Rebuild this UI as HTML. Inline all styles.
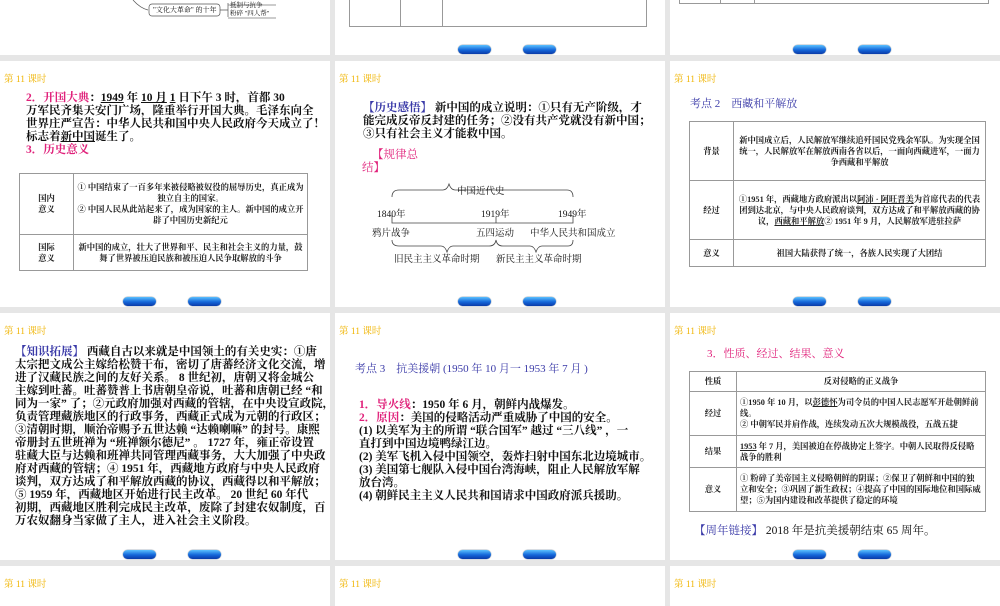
<!DOCTYPE html>
<html><head><meta charset="utf-8"><style>
*{margin:0;padding:0;box-sizing:border-box}
body{width:1000px;height:600px;background:#e6e6e6;position:relative;overflow:hidden;font-family:"Liberation Serif","Noto Serif CJK SC",serif;color:#111}
.p{position:absolute;background:#fff;overflow:hidden}
.a{position:absolute;white-space:nowrap}
.h{position:absolute;left:4px;font-size:9.5px;color:#f0b400;font-family:"Liberation Serif","Noto Serif CJK SC",serif}
.b{position:absolute;width:33px;height:9px;border-radius:5px;background:linear-gradient(#5ac0ff,#1466d8 55%,#0a3aa8);box-shadow:0 0 1px #024}
.t{font-size:11.5px;line-height:13px;font-weight:bold}
.pk{color:#e0207a}
.bl{color:#3a3aa8}
table{border-collapse:collapse;position:absolute;font-size:8.3px;line-height:11px;font-weight:bold;color:#222}
td{border:1px solid #999;text-align:center;vertical-align:middle;padding:1px 3px}
u{text-decoration:underline}
.d{position:absolute;white-space:nowrap;font-size:9.5px}
</style></head><body>

<div class="p" style="left:0;top:0;width:330px;height:55px">
  <svg class="a" style="left:0;top:0" width="330" height="55"><path d="M133 0 Q140 8 148 10" stroke="#555" fill="none" stroke-width=".7"/><rect x="149" y="4" width="71" height="12" rx="3" fill="none" stroke="#555" stroke-width=".7"/><path d="M220 10 H228 M228 3 V17" stroke="#555" stroke-width=".7"/><path d="M228 5 H276 M228 18 H276" stroke="#777" stroke-width=".7"/></svg>
  <div class="a" style="left:153px;top:5px;font-size:7px">"文化大革命" 的十年</div>
  <div class="a" style="left:230px;top:2px;font-size:6.5px;line-height:8px">抵制与抗争<br>粉碎 "四人帮"</div>
</div>
<div class="p" style="left:335px;top:0;width:330px;height:55px">
  <div class="a" style="left:14px;top:-1px;width:298px;height:28px;border:1px solid #999;border-top:none"></div>
  <div class="a" style="left:65px;top:0;width:1px;height:27px;background:#999"></div>
  <div class="a" style="left:107px;top:0;width:1px;height:27px;background:#999"></div>
  <div class="b" style="left:123px;top:45px"></div><div class="b" style="left:188px;top:45px"></div>
</div>
<div class="p" style="left:670px;top:0;width:330px;height:55px">
  <div class="a" style="left:9px;top:-1px;width:310px;height:5px;border:1px solid #999;border-top:none"></div>
  <div class="a" style="left:50px;top:0;width:1px;height:4px;background:#999"></div>
  <div class="a" style="left:84px;top:0;width:1px;height:4px;background:#999"></div>
  <div class="b" style="left:123px;top:45px"></div><div class="b" style="left:188px;top:45px"></div>
</div>

<div class="p" style="left:0;top:61px;width:330px;height:246px">
  <div class="h" style="top:10px">第 11 课时</div>
  <div class="a t" style="left:26px;top:31px"><span class="pk">2．开国大典</span>：<u>1949</u> 年 <u>10 月</u> <u>1</u> 日下午 3 时，首都 30<br>万军民齐集天安门广场，隆重举行开国大典。毛泽东向全<br>世界庄严宣告：中华人民共和国中央人民政府今天成立了！<br>标志着<u>新中国</u>诞生了。<br><span class="pk">3．历史意义</span></div>
  <table style="left:19px;top:112px;width:289px">
    <tr style="height:61px"><td style="width:54px">国内<br>意义</td><td>① 中国结束了一百多年来被侵略被奴役的屈辱历史，真正成为独立自主的国家。<br>② 中国人民从此站起来了，成为国家的主人。新中国的成立开辟了中国历史新纪元</td></tr>
    <tr style="height:36px"><td>国际<br>意义</td><td>新中国的成立，壮大了世界和平、民主和社会主义的力量，鼓舞了世界被压迫民族和被压迫人民争取解放的斗争</td></tr>
  </table>
  <div class="b" style="left:123px;top:236px"></div><div class="b" style="left:188px;top:236px"></div>
</div>
<div class="p" style="left:335px;top:61px;width:330px;height:246px">
  <div class="h" style="top:10px">第 11 课时</div>
  <div class="a t" style="left:28px;top:41px"><span class="bl">【历史感悟】</span> 新中国的成立说明：①只有无产阶级，才<br>能完成反帝反封建的任务；②没有共产党就没有新中国；<br>③只有社会主义才能救中国。</div>
  <div class="a" style="left:37px;top:88px;font-size:11.5px;line-height:13px;color:#e0207a">【规律总<br><span style="margin-left:-10px">结】</span></div>
  <svg class="a" style="left:0;top:119px" width="330" height="90"><g stroke="#444" fill="none" stroke-width=".8"><path d="M57 17 Q57 10 64 10 H108 Q112 10 114 4 Q116 10 120 10 H232 Q238 10 238 17"/><path d="M57 35 V43 H238 V35 M161 37 V43"/><path d="M57 60 Q57 66 64 66 H106 Q110 66 112 72 Q114 66 118 66 H154 Q160 66 161 60 Q162 66 168 66 H195 Q199 66 201 72 Q203 66 207 66 H233 Q238 66 238 60"/></g></svg>
  <div class="d" style="left:122px;top:122px">中国近代史</div>
  <div class="d" style="left:42px;top:145px">1840年</div>
  <div class="d" style="left:146px;top:145px">1919年</div>
  <div class="d" style="left:223px;top:145px">1949年</div>
  <div class="d" style="left:37px;top:164px">鸦片战争</div>
  <div class="d" style="left:141px;top:164px">五四运动</div>
  <div class="d" style="left:195px;top:164px">中华人民共和国成立</div>
  <div class="d" style="left:59px;top:190px">旧民主主义革命时期</div>
  <div class="d" style="left:161px;top:190px">新民主主义革命时期</div>
  <div class="b" style="left:123px;top:236px"></div><div class="b" style="left:188px;top:236px"></div>
</div>
<div class="p" style="left:670px;top:61px;width:330px;height:246px">
  <div class="h" style="top:10px">第 11 课时</div>
  <div class="a bl" style="left:20px;top:34px;font-size:11px">考点 2　西藏和平解放</div>
  <table style="left:19px;top:60px;width:297px">
    <tr style="height:59px"><td style="width:44px">背景</td><td>新中国成立后，人民解放军继续追歼国民党残余军队。为实现全国统一，人民解放军在解放西南各省以后，一面向西藏进军，一面力争西藏和平解放</td></tr>
    <tr style="height:59px"><td>经过</td><td>①1951 年，西藏地方政府派出以<u>阿沛 · 阿旺晋美</u>为首席代表的代表团到达北京，与中央人民政府谈判，双方达成了和平解放西藏的协议，<u>西藏和平解放</u>② 1951 年 9 月，人民解放军进驻拉萨</td></tr>
    <tr style="height:27px"><td>意义</td><td>祖国大陆获得了统一，各族人民实现了大团结</td></tr>
  </table>
  <div class="b" style="left:123px;top:236px"></div><div class="b" style="left:188px;top:236px"></div>
</div>

<div class="p" style="left:0;top:313px;width:330px;height:247px">
  <div class="h" style="top:10px">第 11 课时</div>
  <div class="a t" style="left:15px;top:33px"><span class="bl">【知识拓展】</span> 西藏自古以来就是中国领土的有关史实：①唐<br>太宗把文成公主嫁给松赞干布，密切了唐蕃经济文化交流，增<br>进了汉藏民族之间的友好关系。 8 世纪初，唐朝又将金城公<br>主嫁到吐蕃。吐蕃赞普上书唐朝皇帝说，吐蕃和唐朝已经 “和<br>同为一家” 了；②元政府加强对西藏的管辖，在中央设宣政院，<br>负责管理藏族地区的行政事务，西藏正式成为元朝的行政区；<br>③清朝时期，顺治帝赐予五世达赖 “达赖喇嘛” 的封号。康熙<br>帝册封五世班禅为 “班禅额尔德尼” 。 1727 年，雍正帝设置<br>驻藏大臣与达赖和班禅共同管理西藏事务，大大加强了中央政<br>府对西藏的管辖；④ 1951 年，西藏地方政府与中央人民政府<br>谈判，双方达成了和平解放西藏的协议，西藏得以和平解放；<br>⑤ 1959 年，西藏地区开始进行民主改革。 20 世纪 60 年代<br>初期，西藏地区胜利完成民主改革，废除了封建农奴制度，百<br>万农奴翻身当家做了主人，进入社会主义阶段。</div>
  <div class="b" style="left:123px;top:237px"></div><div class="b" style="left:188px;top:237px"></div>
</div>
<div class="p" style="left:335px;top:313px;width:330px;height:247px">
  <div class="h" style="top:10px">第 11 课时</div>
  <div class="a bl" style="left:20px;top:47px;font-size:11px">考点 3　抗美援朝 (1950 年 10 月一 1953 年 7 月 )</div>
  <div class="a t" style="left:24px;top:86px"><span class="pk">1．导火线</span>：1950 年 6 月，朝鲜内战爆发。<br><span class="pk">2．原因</span>：美国的侵略活动严重威胁了中国的安全。<br>(1) 以美军为主的所谓 “联合国军” 越过 “三八线” ，一<br>直打到中国边境鸭绿江边。<br>(2) 美军飞机入侵中国领空，轰炸扫射中国东北边境城市。<br>(3) 美国第七舰队入侵中国台湾海峡，阻止人民解放军解<br>放台湾。<br>(4) 朝鲜民主主义人民共和国请求中国政府派兵援助。</div>
  <div class="b" style="left:123px;top:237px"></div><div class="b" style="left:188px;top:237px"></div>
</div>
<div class="p" style="left:670px;top:313px;width:330px;height:247px">
  <div class="h" style="top:10px">第 11 课时</div>
  <div class="a pk" style="left:37px;top:32px;font-size:11px">3．性质、经过、结果、意义</div>
  <table style="left:19px;top:58px;width:297px">
    <tr style="height:20px"><td style="width:47px">性质</td><td>反对侵略的正义战争</td></tr>
    <tr style="height:44px"><td>经过</td><td style="text-align:left">①1950 年 10 月，以<u>彭德怀</u>为司令员的中国人民志愿军开赴朝鲜前线。<br>② 中朝军民并肩作战，连续发动五次大规模战役，五战五捷</td></tr>
    <tr style="height:32px"><td>结果</td><td style="text-align:left"><u>1953</u> 年 7 月，美国被迫在停战协定上签字。中朝人民取得反侵略战争的胜利</td></tr>
    <tr style="height:44px"><td>意义</td><td style="text-align:left">① 粉碎了美帝国主义侵略朝鲜的阴谋；②保卫了朝鲜和中国的独立和安全；③巩固了新生政权；④提高了中国的国际地位和国际威望；⑤为国内建设和改革提供了稳定的环境</td></tr>
  </table>
  <div class="a t" style="left:24px;top:212px;font-weight:normal"><span class="bl">【周年链接】</span> 2018 年是抗美援朝结束 65 周年。</div>
  <div class="b" style="left:123px;top:237px"></div><div class="b" style="left:188px;top:237px"></div>
</div>

<div class="p" style="left:0;top:566px;width:330px;height:40px"><div class="h" style="top:10px">第 11 课时</div></div>
<div class="p" style="left:335px;top:566px;width:330px;height:40px"><div class="h" style="top:10px">第 11 课时</div></div>
<div class="p" style="left:670px;top:566px;width:330px;height:40px"><div class="h" style="top:10px">第 11 课时</div></div>
</body></html>
